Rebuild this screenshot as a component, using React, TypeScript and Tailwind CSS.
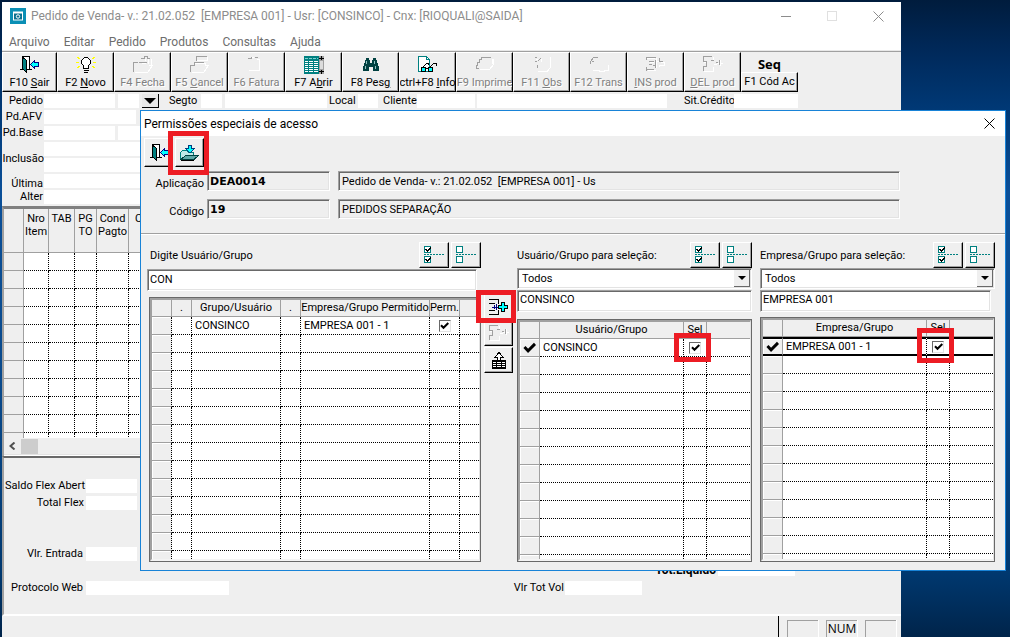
import { useId, useState, type ReactNode } from "react";
import { clsx } from "clsx";

const RAISED = "border border-t-white border-l-white border-r-black border-b-black bg-[#efefef] shadow-[inset_-1px_-1px_0_#a0a0a0]";
const SUNKEN = "border border-t-[#a0a0a0] border-l-[#a0a0a0] border-r-white border-b-white shadow-[inset_1px_1px_0_#696969,inset_-1px_-1px_0_#e3e3e3]";

function Svg({ w, h, children }: { w: number; h: number; children: ReactNode }) {
  return (
    <svg width={w} height={h} viewBox={`0 0 ${w} ${h}`} fill="none" shapeRendering="crispEdges" className="shrink-0" aria-hidden="true">
      {children}
    </svg>
  );
}

/* Icons */

function DoorIcon() {
  return (
    <Svg w={20} h={18}>
      <path d="M2.5 13.5V.5H9.5V13.5" fill="#fff" stroke="#000" />
      <path d="M0 13.5H3M7 13.5H12" stroke="#000" />
      <path d="M2.5 1L6.5 4.5V16.5L2.5 12.5Z" fill="#008080" stroke="#000" />
      <path d="M10.5 8.5L14.5 4.5V6.5H18.5V10.5H14.5V12.5Z" fill="#0ff" stroke="#000080" />
    </Svg>
  );
}

function BulbIcon() {
  return (
    <Svg w={20} h={18}>
      <path d="M1 1L4 3M0 6.5H3M1 12L4 10M19 1L16 3M20 6.5H17M19 12L16 10" stroke="#ff0" />
      <path d="M8.5 1.5H11.5L14.5 4.5V7.5L12.5 9.5V12.5H7.5V9.5L5.5 7.5V4.5Z" fill="#fff" stroke="#000" />
      <path d="M8 14.5H13M8 16.5H12" stroke="#000" />
    </Svg>
  );
}

function ListIcon() {
  return (
    <Svg w={20} h={18}>
      <path d="M0 0H19V18H0Z" fill="#008080" />
      <path d="M1 5.5H14M1 7.5H14M1 9.5H14M1 11.5H14M1 13.5H14M1 15.5H14" stroke="#fff" />
      <path d="M1 2.5H14" stroke="#7fd0d0" strokeDasharray="3 1" />
      <path d="M4.5 4V17M9.5 4V17" stroke="#008080" />
      <path d="M15 0H20V18H15Z" fill="#a0a0a0" />
      <path d="M16 5H19V13H16Z" fill="#dcdcdc" />
      <path d="M15 2.5H20M17.5 0V4M15 15.5H20M17.5 14V18" stroke="#000" />
    </Svg>
  );
}

function BinocularsIcon() {
  return (
    <Svg w={16} h={14}>
      <path d="M3 0H6V2H7V5H9V2H10V0H13V2H14V5H15V8H16V13H10V9H6V13H0V8H1V5H2V2H3Z" fill="#004040" />
      <path d="M3.5 3V6M2.5 8V11M11.5 3V6M12.5 8V11" stroke="#8fc0c0" />
    </Svg>
  );
}

function InfoIcon() {
  return (
    <Svg w={20} h={18}>
      <path d="M.5.5H8.5L11.5 3.5V15.5H.5Z" fill="#fff" stroke="#008080" />
      <path d="M8.5 .5V3.5H11.5" stroke="#008080" />
      <path d="M4 12L9 7H10V9M11 12L16 7H18V10" stroke="#000" />
      <rect x="3.5" y="11.5" width="4" height="4" fill="#0ff" stroke="#000" />
      <rect x="10.5" y="11.5" width="4" height="4" fill="#0ff" stroke="#000" />
      <path d="M8 12.5H10" stroke="#000" />
    </Svg>
  );
}

// Disabled icons are an embossed outline: grey strokes with a white edge.
function Embossed({ grey, white }: { grey: string; white: string }) {
  return (
    <Svg w={20} h={18}>
      <path d={white} stroke="#fff" />
      <path d={grey} stroke="#a0a0a0" />
    </Svg>
  );
}

const EMBOSS = {
  fecha: {
    grey: "M.5 16V6.5H5M6 6.5H14M8 2.5H11V.5H14V2.5H17",
    white: "M1.5 16.5H14.5L19.5 9.5H16M15.5 3V8M18.5 3V9M9 7.5H13M12.5 3V5",
  },
  cancel: {
    grey: "M.5 16V9.5H4.5V6.5H14M6.5 5V.5H17",
    white: "M1.5 16.5H13.5L18.5 9.5H15V7.5H5M7 4.5H17.5V1",
  },
  fatura: {
    grey: "M1 2.5H4V.5M8 1.5H11",
    white: "M2 14.5H12.5V3.5H10M5 1.5H7",
  },
  imprime: {
    grey: "M1 12.5V9.5H2.5V6.5H4.5V3.5H6.5V1.5H16M1 12.5H4",
    white: "M5 13.5H14.5L18.5 8.5V2.5M17 2.5V8",
  },
  obs: {
    grey: "M3 1.5H5M8 1.5V3L6 5M3 5.5H5M5.5 9V12",
    white: "M6 15.5H15L18.5 11.5V1M9 3V6M4 3H6",
  },
  trans: {
    grey: "M1.5 8V5.5L4.5 1.5H9M3 5.5H5",
    white: "M4 14.5H10V15.5H16M15 14.5H20M19.5 9V14",
  },
  ins: {
    grey: "M0 1.5H10M.5 1V4M3 5.5H8M9.5 4V12M3 8.5H6M7 9.5H9M0 13.5H8M.5 11V15M13.5 2V5H17",
    white: "M1 2.5H9M11 5.5H13M13.5 11V9H18.5V6H15M2 14.5H10M10.5 2V12M4 6.5H8",
  },
  del: {
    grey: "M9 .5H.5V5.5H3.5V10.5H.5V15M8 4.5H11M16.5 4V9M13 6.5H15",
    white: "M1 15.5H10.5V11M10.5 1V4M1 6.5H3M11 8.5H14M14 7.5H20M17.5 4V10",
  },
};

function SaveFolderIcon() {
  return (
    <Svg w={20} h={18}>
      <path d="M.5 16V8.5L2.5 6.5H7L8.5 8.5H13.5V11" fill="#c0e8e8" stroke="#008080" />
      <path d="M1 15.5L5.5 11.5H18.5L14 15.5Z" fill="#5fa8a8" stroke="#004040" />
      <path d="M1 16.5H14" stroke="#000" />
      <path d="M8.5 1.5H11.5V4.5H14.5L10 9L5.5 4.5H8.5Z" fill="#0ff" stroke="#004080" />
    </Svg>
  );
}

function MarkAllIcon({ checked }: { checked?: boolean }) {
  return (
    <Svg w={21} h={17}>
      <path d="M.5.5H6.5V6.5H.5ZM.5 10.5H6.5V16.5H.5Z" fill="#fff" stroke="#008080" />
      <path d="M0 8.5H21" stroke="#008080" strokeDasharray="2 1" />
      {checked && <path d="M2 3L3.5 5L7 1.5M2 13L3.5 15L7 11.5" stroke="#000" strokeWidth="1.5" />}
    </Svg>
  );
}

function AddRowIcon() {
  return (
    <Svg w={20} h={16}>
      <path d="M0 .5H10M0 4.5H6M0 11.5H6M0 15.5H10M9.5 0V5M9.5 11V16" stroke="#000" />
      <path d="M3 8H10M5 6V10M7 5V11" stroke="#000080" />
      <path d="M12.5 3.5H15.5V6.5H18.5V9.5H15.5V12.5H12.5V9.5H9.5V6.5H12.5Z" fill="#0ff" stroke="#000" />
    </Svg>
  );
}

function SendUpIcon() {
  return (
    <Svg w={14} h={17}>
      <path d="M7 .5L2.5 5.5H5.5V8.5H8.5V5.5H11.5Z" fill="#fff" stroke="#000" />
      <path d="M0 8H5V9H9V8H14V17H0Z" fill="#000" />
      <path d="M1 10.5H13M1 12.5H13M1 14.5H13" stroke="#fff" />
      <path d="M4.5 9V16M9.5 9V16" stroke="#000" />
    </Svg>
  );
}

function Tick({ size = 9 }: { size?: number }) {
  return (
    <svg width={size} height={size} viewBox="0 0 9 9" aria-hidden="true">
      <path d="M1 4.2L3.5 6.8L8.3 2" fill="none" stroke="#000" strokeWidth="2" />
    </svg>
  );
}

/* Controls */

function Mark({ className }: { className: string }) {
  return <span className={clsx("pointer-events-none absolute z-10 border-[5px] border-[#ed1c24]", className)} />;
}

function Check({ label }: { label: string }) {
  const [on, setOn] = useState(true);
  return (
    <span className="relative block size-3">
      <input
        type="checkbox"
        aria-label={label}
        checked={on}
        onChange={(e) => setOn(e.target.checked)}
        className="block size-3 appearance-none border border-t-[#696969] border-l-[#696969] border-r-[#e3e3e3] border-b-[#e3e3e3] bg-white"
      />
      {on && (
        <span className="pointer-events-none absolute inset-0 grid place-items-center">
          <Tick />
        </span>
      )}
    </span>
  );
}

function Box({ label, className }: { label: string; className: string }) {
  return <input aria-label={label} className={clsx("h-3.5 shrink-0 bg-white px-0.5 outline-none", className)} />;
}

function Field({ label, labelClass, className }: { label: string; labelClass: string; className: string }) {
  const id = useId();
  return (
    <div className="flex h-3.5 items-center">
      <label htmlFor={id} className={clsx("shrink-0 pt-px whitespace-nowrap", labelClass)}>{label}</label>
      <input id={id} className={clsx("h-3.5 shrink-0 bg-white px-0.5 outline-none", className)} />
    </div>
  );
}

function Combo({ label }: { label: string }) {
  return (
    <div className={clsx("relative h-[21px] bg-white p-0.5", SUNKEN)}>
      <select aria-label={label} className="block h-full w-full appearance-none bg-transparent pl-0.5 outline-none">
        <option>Todos</option>
      </select>
      <span className="pointer-events-none absolute top-px right-px bottom-px grid w-4 place-items-center border-r border-b border-[#696969] bg-[#efefef]">
        <span className="border-x-4 border-t-4 border-x-transparent border-t-black" />
      </span>
    </div>
  );
}

interface Tool {
  label: ReactNode;
  icon: ReactNode;
  disabled?: boolean;
}

const TOOLS: Tool[] = [
  { label: <>F10 <u>S</u>air</>, icon: <DoorIcon /> },
  { label: <>F2 <u>N</u>ovo</>, icon: <BulbIcon /> },
  { label: "F4 Fecha", icon: <Embossed {...EMBOSS.fecha} />, disabled: true },
  { label: <>F5 <u>C</u>ancel</>, icon: <Embossed {...EMBOSS.cancel} />, disabled: true },
  { label: "F6 Fatura", icon: <Embossed {...EMBOSS.fatura} />, disabled: true },
  { label: <>F7 A<u>b</u>rir</>, icon: <ListIcon /> },
  { label: <>F8 Pes<u>g</u></>, icon: <BinocularsIcon /> },
  { label: <>ctrl+F8 <u>I</u>nfo</>, icon: <InfoIcon /> },
  { label: "F9 Imprime", icon: <Embossed {...EMBOSS.imprime} />, disabled: true },
  { label: <>F11 <u>O</u>bs</>, icon: <Embossed {...EMBOSS.obs} />, disabled: true },
  { label: "F12 Trans", icon: <Embossed {...EMBOSS.trans} />, disabled: true },
  { label: <><u>I</u>NS prod</>, icon: <Embossed {...EMBOSS.ins} />, disabled: true },
  { label: <><u>D</u>EL prod</>, icon: <Embossed {...EMBOSS.del} />, disabled: true },
];

function Toolbar() {
  return (
    <div className="flex h-[41px] border-t border-[#a0a0a0]">
      {TOOLS.map((tool, i) => (
        <button
          key={i}
          type="button"
          disabled={tool.disabled}
          className={clsx(
            "flex w-[57px] shrink-0 flex-col items-center justify-between overflow-hidden pt-[3px] whitespace-nowrap first:w-[55px]",
            RAISED,
            tool.disabled && "text-[#808080] [text-shadow:1px_1px_0_#fff]",
          )}
        >
          <span className="grid h-[18px] place-items-center">{tool.icon}</span>
          <span className="leading-4">{tool.label}</span>
        </button>
      ))}
      <div className="flex w-[57px] flex-col">
        <span className="h-5 pt-1 text-center font-['Open_Sans',sans-serif] text-[13px] leading-4 font-bold">Seq</span>
        <button type="button" className={clsx("flex-1 whitespace-nowrap", RAISED)}>F1 Cód Ac</button>
      </div>
    </div>
  );
}

const ORDER_COLS = [
  { label: "Nro Item", w: "w-[25px]" },
  { label: "TAB", w: "w-[26px]" },
  { label: "PG TO", w: "w-[22px]" },
  { label: "Cond Pagto", w: "w-8" },
  { label: "C", w: "w-auto" },
];

function OrderGrid() {
  return (
    <div className="border-t-[3px] border-l-2 border-t-[#808080] border-l-[#a0a0a0]">
      <div className="h-[229px] overflow-hidden bg-white">
        <table className="w-full table-fixed border-separate border-spacing-0">
          <thead>
            <tr className="h-11 bg-[#efefef]">
              <th className="w-5 border-r border-b border-[#a0a0a0]" />
              {ORDER_COLS.map((c) => (
                <th key={c.label} className={clsx("overflow-hidden border-r border-b border-[#a0a0a0] pt-[3px] text-center align-top leading-[13px] font-normal last:pl-1.5 last:text-left", c.w)}>
                  {c.label}
                </th>
              ))}
            </tr>
          </thead>
          <tbody>
            {Array.from({ length: 11 }).map((_, i) => (
              <tr key={i} className="h-[18px]">
                <td className="border-r border-b border-[#a0a0a0] bg-[#efefef]" />
                {ORDER_COLS.map((c) => (
                  <td key={c.label} className="border-r border-b border-dotted border-black" />
                ))}
              </tr>
            ))}
          </tbody>
        </table>
      </div>
      <div className="flex h-4 items-center">
        <button type="button" aria-label="Rolar para a esquerda" className="grid w-[17px] place-items-center">
          <svg width="7" height="8" viewBox="0 0 7 8" aria-hidden="true">
            <path d="M5.5 .5L1.5 4L5.5 7.5" fill="none" stroke="#505050" strokeWidth="2" />
          </svg>
        </button>
        <span className="h-[15px] w-[17px] bg-[#cdcdcd]" />
      </div>
      <div className="h-0.5 border-t border-[#e3e3e3] bg-white" />
    </div>
  );
}

function MainWindow() {
  return (
    <section className="absolute top-0.5 right-[109px] bottom-0 left-0.5 flex flex-col overflow-hidden bg-[#efefef]">
      <header className="flex h-7 shrink-0 items-center bg-white pl-2">
        <svg width="16" height="16" viewBox="0 0 16 16" aria-hidden="true">
          <path d="M0 0H16V16H0Z" fill="#0a8fb5" />
          <path d="M3 3.5H13V12.5H3Z" fill="#fff" />
          <path d="M4 5.5H12V11.5H4Z" fill="#0a7090" />
          <circle cx="8" cy="8.5" r="1.7" fill="none" stroke="#fff" />
        </svg>
        <h1 className="flex-1 pl-[5px] text-[12px] whitespace-pre text-[#8c8c8c]">
          {"Pedido de Venda- v.: 21.02.052  [EMPRESA 001] - Usr: [CONSINCO] - Cnx: [RIOQUALI@SAIDA]"}
        </h1>
        <div className="flex gap-[35px] pr-[17px] text-[#8c8c8c]">
          <button type="button" aria-label="Minimizar">
            <Svg w={11} h={10}><path d="M0 5.5H10" stroke="currentColor" /></Svg>
          </button>
          <button type="button" aria-label="Maximizar" disabled className="text-[#e0e0e0]">
            <Svg w={11} h={10}><path d="M.5.5H9.5V9.5H.5Z" stroke="currentColor" /></Svg>
          </button>
          <button type="button" aria-label="Fechar">
            <svg width="11" height="11" viewBox="0 0 11 11" aria-hidden="true"><path d="M.5.5L10.5 10.5M10.5.5L.5 10.5" stroke="currentColor" /></svg>
          </button>
        </div>
      </header>
      <nav className="flex h-[21px] shrink-0 items-center gap-3.5 border-b border-[#e8e8e8] bg-white pt-1 pl-[7px] text-[12px] text-[#6d6d6d]">
        {["Arquivo", "Editar", "Pedido", "Produtos", "Consultas", "Ajuda"].map((m) => (
          <button key={m} type="button">{m}</button>
        ))}
      </nav>
      <Toolbar />

      <div className="flex flex-col gap-0.5 pt-0.5 pb-0.5">
        <div className="flex items-center">
          <Field label="Pedido" labelClass="w-[42px] pr-px text-right" className="w-[71px]" />
          <Box label="Série" className="ml-[3px] w-[21px]" />
          <button type="button" aria-label="Escolher pedido" className="mr-2.5 ml-[3px] grid h-3.5 w-[17px] place-items-center border-r border-b border-black bg-[#e8e8e8]">
            <span className="border-x-[6px] border-t-[6px] border-x-transparent border-t-black" />
          </button>
          <Field label="Segto" labelClass="w-8" className="w-[21px]" />
          <Box label="Segmento" className="mr-0.5 ml-[3px] w-[102px]" />
          <Field label="Local" labelClass="w-[29px]" className="mr-[5px] w-5" />
          <Field label="Cliente" labelClass="w-[34px]" className="w-[58px]" />
          <Box label="Nome do cliente" className="mr-[17px] ml-0.5 w-[190px]" />
          <Field label="Sit.Crédito" labelClass="w-[50px]" className="w-16" />
        </div>
        <Field label="Pd.AFV" labelClass="w-[42px] pr-0.5 text-right" className="w-[92px]" />
        <div className="flex">
          <Field label="Pd.Base" labelClass="w-[42px] pr-px text-right" className="w-[71px]" />
          <Box label="Série base" className="ml-[3px] w-24" />
        </div>
        <div className="flex items-center">
          <span className="w-[42px] pt-1 text-right">Inclusão</span>
          <div className="flex flex-col gap-0.5">
            <Box label="Data de inclusão" className="w-44" />
            <Box label="Usuário de inclusão" className="w-44" />
          </div>
        </div>
        <div className="flex items-center">
          <span className="w-[42px] pt-0.5 pr-px text-right leading-[13px]">Última<br />Alter</span>
          <div className="flex flex-col gap-0.5">
            <Box label="Data da última alteração" className="w-44" />
            <Box label="Usuário da última alteração" className="w-44" />
          </div>
        </div>
      </div>

      <OrderGrid />

      <div className="flex flex-1 border-t-2 border-b-2 border-l-2 border-t-[#696969] border-b-white border-l-[#a0a0a0] pt-[21px]">
        <div className="flex w-[480px] flex-col gap-[3px]">
          <Field label="Saldo Flex Abert" labelClass="w-[82px] pr-px text-right" className="w-[51px]" />
          <Field label="Total Flex" labelClass="w-[82px] pr-0.5 text-right" className="w-[51px]" />
          <div className="mt-[34px]">
            <Field label="Vlr. Entrada" labelClass="w-[82px] pr-[3px] text-right" className="w-[51px]" />
          </div>
          <div className="mt-[17px]">
            <Field label="Protocolo Web" labelClass="w-[82px] pr-[3px] text-right" className="w-[143px]" />
          </div>
        </div>
        <div className="flex flex-1 flex-col gap-[5px] pt-[83px]">
          <Field label="Tot.Líquido" labelClass="w-[234px] pr-0.5 text-right font-bold text-[12px]" className="w-[77px]" />
          <Field label="Vlr Tot Vol" labelClass="w-[81px] pr-px text-right" className="w-[77px]" />
        </div>
      </div>

      <footer className="flex h-[21px] shrink-0 justify-end font-['Open_Sans',sans-serif] text-[12px]">
        <div className="flex gap-2 border-l border-black pt-1 pr-[5px] pl-2">
          {["", "NUM", ""].map((s, i) => (
            <span key={i} className="h-[17px] w-[31px] border-t border-l border-t-[#a0a0a0] border-l-[#a0a0a0] text-center leading-4 shadow-[1px_0_0_#fff]">
              {s}
            </span>
          ))}
        </div>
      </footer>
    </section>
  );
}

interface Col {
  label: string;
  w: string;
  value?: ReactNode;
}

function DataGrid({ stub, cols, rows, ticked, active, dottedStub, className }: {
  stub: string;
  cols: Col[];
  rows: number;
  ticked?: boolean;
  active?: boolean;
  dottedStub?: boolean;
  className?: string;
}) {
  return (
    <div className={clsx("min-h-0 flex-1 border border-[#696969]", className)}>
      <div className="relative h-full border-t-2 border-r border-b-2 border-l-2 border-t-[#a0a0a0] border-r-[#e3e3e3] border-b-[#f4f4f4] border-l-[#a0a0a0] bg-white">
        {/* the last row is cut by the frame */}
        <div className="absolute inset-0 overflow-hidden">
          <table className="w-full table-fixed border-separate border-spacing-0">
            <thead>
              <tr className="h-[17px] bg-[#efefef]">
                <th className={clsx("border-r border-b border-[#a0a0a0]", stub)} />
                {cols.map((c, i) => (
                  <th
                    key={i}
                    className={clsx(
                      "border-b border-[#a0a0a0] p-0 text-center leading-4 font-normal whitespace-nowrap",
                      i < cols.length - 1 && "border-r",
                      c.w,
                    )}
                  >
                    {c.label}
                  </th>
                ))}
              </tr>
            </thead>
            <tbody>
              {Array.from({ length: rows }).map((_, r) => {
                const strong = active && r === 0;
                return (
                  <tr key={r} className="h-[18px]">
                    <td
                      className={clsx(
                        "border-b bg-[#efefef] p-0 shadow-[inset_1px_1px_0_#fff]",
                        strong ? "border-t-2 border-b-2 border-black" : "border-[#a0a0a0]",
                        dottedStub ? "border-r border-r-black [border-right-style:dotted]" : "border-r border-r-[#a0a0a0]",
                      )}
                    >
                      {ticked && r === 0 && (
                        <span className="grid place-items-center"><Tick size={13} /></span>
                      )}
                    </td>
                    {cols.map((c, i) => (
                      <td
                        key={i}
                        className={clsx(
                          "border-black p-0 leading-[15px] whitespace-nowrap",
                          strong ? "border-t-2 border-b-2" : "border-b [border-bottom-style:dotted]",
                          i < cols.length - 1 && "border-r [border-right-style:dotted]",
                        )}
                      >
                        {r === 0 && (typeof c.value === "string" ? <span className="pl-[3px]">{c.value}</span> : c.value)}
                      </td>
                    ))}
                  </tr>
                );
              })}
            </tbody>
          </table>
        </div>
      </div>
    </div>
  );
}

function ColumnHead({ label, htmlFor }: { label: string; htmlFor: string }) {
  return (
    <div className="flex h-[27px] items-center gap-0.5">
      <label htmlFor={htmlFor} className="flex-1 pt-[3px] whitespace-nowrap">{label}</label>
      <button type="button" aria-label="Marcar todos" className={clsx("grid h-[26px] w-[30px] place-items-center", RAISED)}>
        <MarkAllIcon checked />
      </button>
      <button type="button" aria-label="Desmarcar todos" className={clsx("grid h-[26px] w-[30px] place-items-center", RAISED)}>
        <MarkAllIcon />
      </button>
    </div>
  );
}

function ReadOnlyRow({ label, code, text }: { label: string; code: string; text: string }) {
  const id = useId();
  return (
    <div className="flex h-5 items-center">
      <label htmlFor={id} className="w-[66px] pt-1.5 pr-[3px] text-right">{label}</label>
      <input id={id} readOnly value={code} className={clsx("h-5 w-[123px] px-0.5 font-['DejaVu_Sans',sans-serif] text-[11px] font-bold outline-none", SUNKEN)} />
      <input aria-label={`Descrição de ${label}`} readOnly value={text} className={clsx("mr-[105px] ml-2 h-5 min-w-0 flex-1 px-[3px] outline-none", SUNKEN)} />
    </div>
  );
}

function PermissionsDialog() {
  const [userFilter, setUserFilter] = useState("CON");
  const [user, setUser] = useState("CONSINCO");
  const [company, setCompany] = useState("EMPRESA 001");

  return (
    <section role="dialog" aria-labelledby="dialog-title" className="absolute top-[110px] right-1 bottom-[66px] left-[140px] flex flex-col border border-[#1883d7] bg-[#efefef]">
      <header className="flex h-[25px] shrink-0 items-center justify-between bg-white pr-2.5 pl-[3px]">
        <h2 id="dialog-title" className="text-[12px]">Permissões especiais de acesso</h2>
        <button type="button" aria-label="Fechar permissões">
          <svg width="11" height="11" viewBox="0 0 11 11" aria-hidden="true"><path d="M.5.5L10.5 10.5M10.5.5L.5 10.5" stroke="#000" /></svg>
        </button>
      </header>

      <div className="flex shrink-0 gap-0.5 pt-0.5 pl-[3px]">
        <button type="button" aria-label="Sair" className={clsx("grid h-[29px] w-[29px] place-items-center overflow-hidden pl-0.5", RAISED)}>
          <DoorIcon />
        </button>
        <div className="relative">
          <button type="button" aria-label="Salvar" className={clsx("grid h-[29px] w-[29px] place-items-center", RAISED)}>
            <SaveFolderIcon />
          </button>
          <Mark className="-top-[7px] -right-[5px] -bottom-2 -left-[7px]" />
        </div>
      </div>

      <div className="flex shrink-0 flex-col gap-2 border-b border-[#a0a0a0] pt-1 pb-3.5">
        <ReadOnlyRow label="Aplicação" code="DEA0014" text="Pedido de Venda- v.: 21.02.052  [EMPRESA 001] - Us" />
        <ReadOnlyRow label="Código" code="19" text="PEDIDOS SEPARAÇÃO" />
      </div>

      <div className="flex min-h-0 flex-1 border-t border-white pt-1.5 pr-2.5 pb-2 pl-1.5">
        <div className="flex flex-[334] basis-0 flex-col">
          <div className="pl-[3px]">
            <ColumnHead label="Digite Usuário/Grupo" htmlFor="user-filter" />
          </div>
          <input
            id="user-filter"
            value={userFilter}
            onChange={(e) => setUserFilter(e.target.value)}
            className={clsx("mt-px mr-1 h-[22px] shrink-0 bg-white px-0.5 pb-0.5 outline-none", SUNKEN)}
          />
          <DataGrid
            className="mt-1.5 ml-0.5"
            stub="w-5"
            dottedStub
            rows={14}
            cols={[
              { label: ".", w: "w-5" },
              { label: "Grupo/Usuário", w: "w-[89px]", value: "CONSINCO" },
              { label: ".", w: "w-5" },
              { label: "Empresa/Grupo Permitido", w: "w-[129px]", value: "EMPRESA 001 - 1" },
              { label: "Perm.", w: "w-[30px]", value: <div className="flex justify-center"><Check label="Permitido" /></div> },
              { label: "", w: "w-auto" },
            ]}
          />
        </div>

        <div className="flex w-9 flex-col gap-px pt-[52px] pr-1 pl-[3px]">
          <div className="relative">
            <button type="button" aria-label="Incluir permissão" className={clsx("grid h-7 w-full place-items-center", RAISED)}>
              <AddRowIcon />
            </button>
            <Mark className="-top-[3px] -right-[3px] -bottom-0.5 -left-2" />
          </div>
          <button type="button" aria-label="Excluir permissão" disabled className={clsx("grid h-6 w-full place-items-center", RAISED)}>
            <Embossed {...EMBOSS.del} />
          </button>
          <button type="button" aria-label="Enviar" className={clsx("grid h-[26px] w-full place-items-center", RAISED)}>
            <SendUpIcon />
          </button>
        </div>

        <div className="flex flex-[235] basis-0 flex-col">
          <ColumnHead label="Usuário/Grupo para seleção:" htmlFor="user-name" />
          <Combo label="Tipo de usuário" />
          <input
            id="user-name"
            value={user}
            onChange={(e) => setUser(e.target.value)}
            className={clsx("mt-px h-[22px] shrink-0 bg-white px-0.5 pb-[3px] outline-none", SUNKEN)}
          />
          <DataGrid
            className="mt-[7px]"
            stub="w-5"
            ticked
            rows={13}
            cols={[
              { label: "Usuário/Grupo", w: "w-36", value: "CONSINCO" },
              {
                label: "Sel",
                w: "w-[23px]",
                value: (
                  <div className="relative flex justify-center">
                    <Check label="Selecionar usuário" />
                    <Mark className="-top-[9px] -right-[5px] -bottom-2 -left-2.5" />
                  </div>
                ),
              },
              { label: "", w: "w-auto" },
            ]}
          />
        </div>

        <div className="ml-2 flex flex-[235] basis-0 flex-col">
          <ColumnHead label="Empresa/Grupo para seleção:" htmlFor="company-name" />
          <Combo label="Tipo de empresa" />
          <input
            id="company-name"
            value={company}
            onChange={(e) => setCompany(e.target.value)}
            className={clsx("mt-px mr-1 h-[22px] shrink-0 bg-white px-0.5 pb-[3px] outline-none", SUNKEN)}
          />
          <DataGrid
            className="mt-[5px]"
            stub="w-5"
            ticked
            active
            rows={13}
            cols={[
              { label: "Empresa/Grupo", w: "w-36", value: "EMPRESA 001 - 1" },
              {
                label: "Sel",
                w: "w-[23px]",
                value: (
                  <div className="relative flex justify-center">
                    <Check label="Selecionar empresa" />
                    <Mark className="-top-[13px] -right-[5px] -bottom-2.5 -left-2.5" />
                  </div>
                ),
              },
              { label: "", w: "w-auto" },
            ]}
          />
        </div>
      </div>
    </section>
  );
}

export default function App() {
  return (
    <main className="relative h-screen min-h-[637px] overflow-hidden bg-[linear-gradient(180deg,#001c3d_0%,#00295a_8%,#003a78_18%,#0a4f98_30%,#0a4a8c_60%,#00386f_90%,#00244a_100%)] font-['Roboto','Liberation_Sans',sans-serif] text-[11px] text-black">
      <MainWindow />
      <PermissionsDialog />
    </main>
  );
}
